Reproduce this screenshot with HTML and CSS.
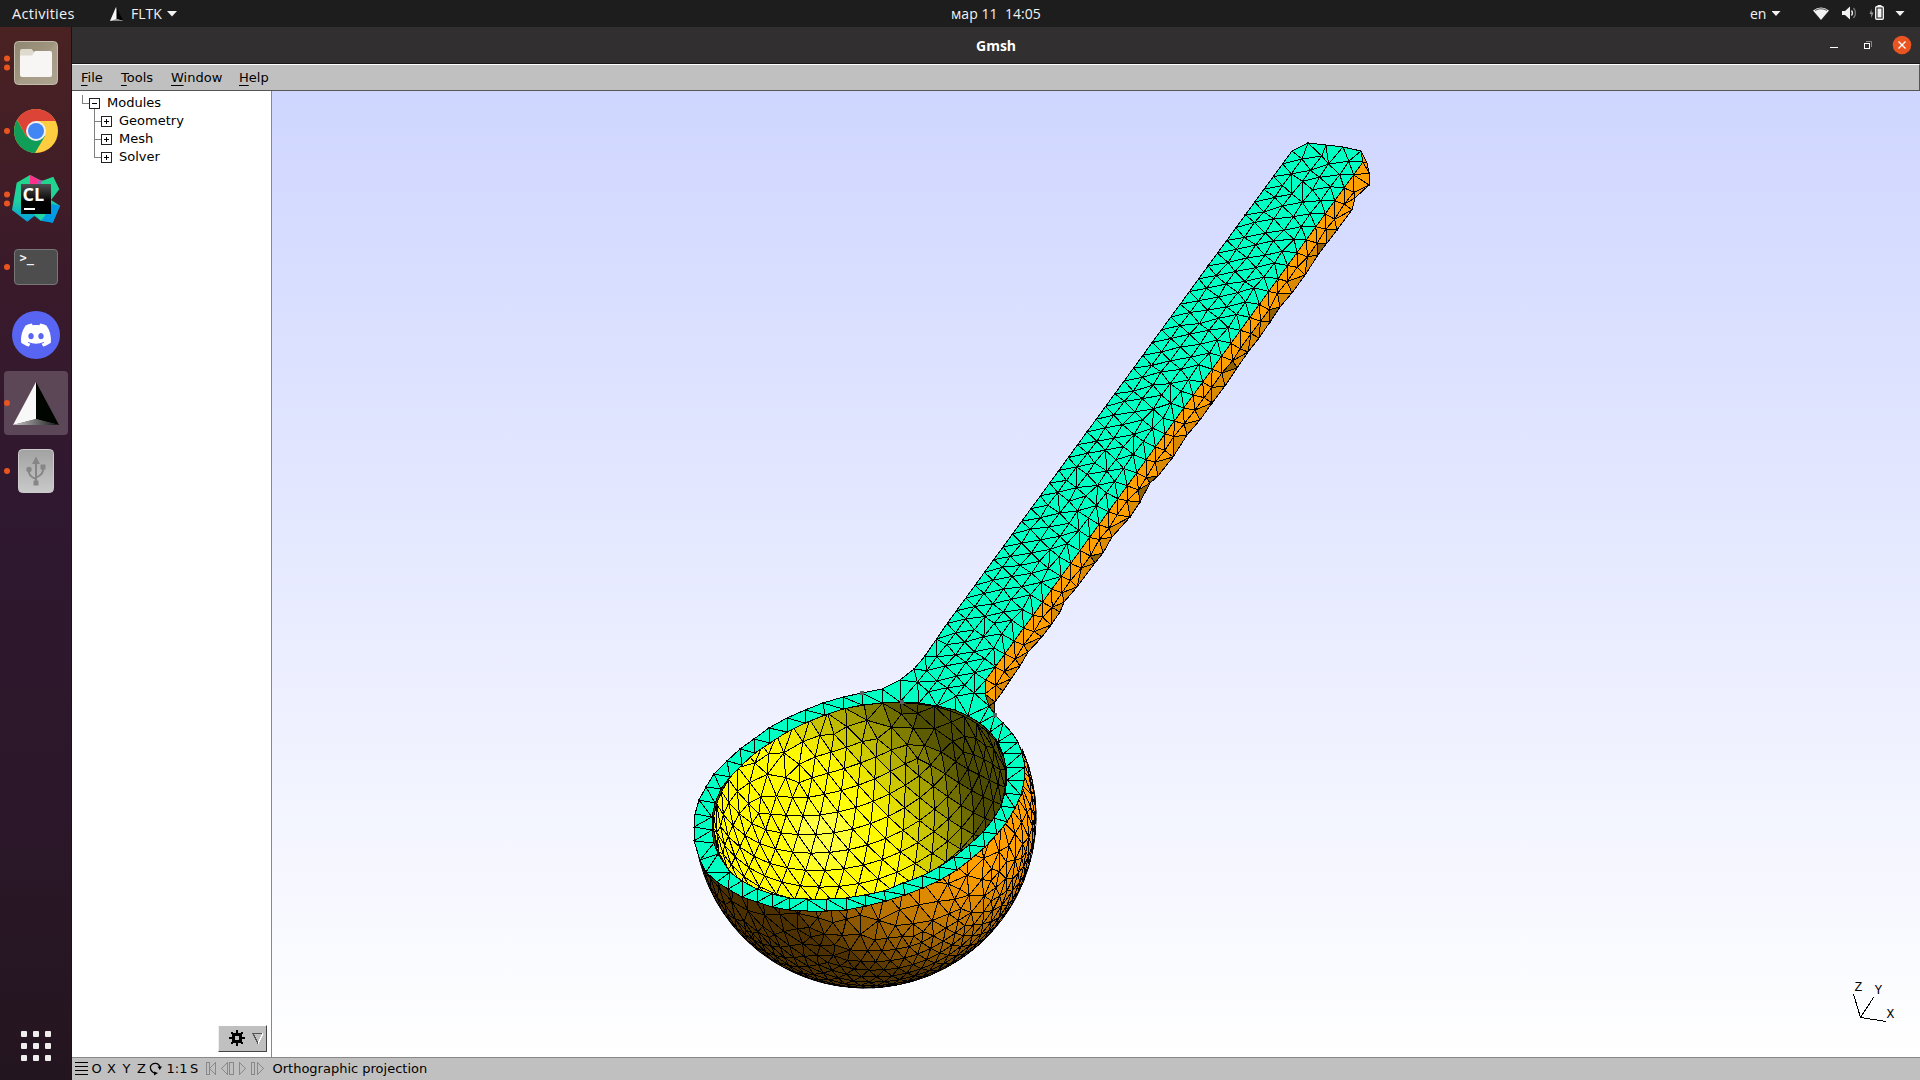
FILE: index.html
```html
<!DOCTYPE html>
<html lang="en">
<head>
<meta charset="utf-8">
<title>Gmsh</title>
<link rel="stylesheet" href="styles.css">
</head>
<body>
<div class="desktop">
  <header class="topbar">
    <span class="activities">Activities</span>
    <svg class="app-glyph" width="16" height="16" viewBox="0 0 16 16"><path d="M8 1 2 15h13z" fill="#f5f5f5"/><path d="M8.500 1v12l7 2z" fill="#000"/><path d="M2 15l6.500-2 7 2z" fill="#888"/></svg>
    <span class="app-name">FLTK</span>
    <svg class="caret" width="10" height="6" viewBox="0 0 10 6"><path d="M0 0h10L5 5.500z" fill="#f2f2f2"/></svg>
    <span class="clock">мар 11&nbsp; 14:05</span>
    <span class="lang">en</span>
    <svg class="tray" width="140" height="27" viewBox="1772 0 140 27">
      <path d="M1771.500 11h9l-4.500 5z" fill="#f2f2f2"/>
      <path d="M1813 10.500q8-6 16 0L1821 20z" fill="#f2f2f2"/><path d="M1815 10.500q6-3.500 12 0" fill="none" stroke="#555" stroke-width="1"/>
      <path d="M1842 11h3l5-4.500v13l-5-4.500h-3z" fill="#f2f2f2"/>
      <path d="M1851.500 10.500q2 2.500 0 5" fill="none" stroke="#f2f2f2" stroke-width="1.300"/>
      <path d="M1853.500 8q4 5 0 10" fill="none" stroke="#777" stroke-width="1.300"/>
      <path d="M1871.500 9l-2 5h1.700v4l2.300-5.500h-2z" fill="#999"/>
      <rect x="1875.700" y="6.700" width="7.600" height="12.600" rx="1" fill="none" stroke="#f2f2f2" stroke-width="1.400"/>
      <rect x="1877.500" y="8.500" width="4" height="9" fill="#f2f2f2"/><rect x="1877.500" y="5" width="4" height="2" fill="#f2f2f2"/>
      <path d="M1895.500 11h9l-4.500 5z" fill="#f2f2f2"/>
    </svg>
  </header>

  <div class="main">
    <nav class="dock">
      <svg class="slot" viewBox="0 0 64 64">
        <defs><linearGradient id="fl" x1="0" y1="0" x2="1" y2="1"><stop offset="0" stop-color="#8f8672"/><stop offset=".5" stop-color="#a0967f"/><stop offset=".5" stop-color="#a59b87"/><stop offset="1" stop-color="#aca390"/></linearGradient></defs>
        <circle cx="3" cy="27.500" r="3" fill="#e95420"/><circle cx="3" cy="36.500" r="3" fill="#e95420"/>
        <rect x="10.500" y="10.500" width="43" height="43" rx="4" fill="url(#fl)" stroke="#c3bcab"/>
        <path d="M16 20q0-2 2-2h9.500l3.500 4v6H16z" fill="#dedacd"/>
        <path d="M16 24.500h12l3-4.500h15q2 0 2 2v22q0 2-2 2H18q-2 0-2-2z" fill="#f7f6f5"/>
      </svg>
      <svg class="slot" viewBox="0 0 64 64">
        <circle cx="3" cy="32" r="3" fill="#e95420"/>
        <circle cx="32" cy="32" r="22" fill="#ffcd40"/>
        <path d="M32 32 22.500 37.500 13 21A22 22 0 0 0 31 54L41 37z" fill="#0f9d58"/>
        <path d="M32 22h19.600A22 22 0 0 0 13 20.700L22.500 37.500 32 32z" fill="#db4437"/>
        <circle cx="32" cy="32" r="10" fill="#f1f1f1"/><circle cx="32" cy="32" r="8" fill="#4285f4"/>
      </svg>
      <svg class="slot" viewBox="0 0 64 64">
        <defs><linearGradient id="c1" x1="0" y1="0" x2="0" y2="1"><stop offset="0" stop-color="#21d789"/><stop offset=".55" stop-color="#21d0a0"/><stop offset="1" stop-color="#009ae5"/></linearGradient>
        <linearGradient id="c2" x1="0" y1="0" x2="0" y2="1"><stop offset="0" stop-color="#505050"/><stop offset=".6" stop-color="#000"/></linearGradient></defs>
        <circle cx="3" cy="27.500" r="3" fill="#e95420"/><circle cx="3" cy="36.500" r="3" fill="#e95420"/>
        <path d="M12.700 15.700 26 8l11.700 6 11.600-4.300 6 12.600L47 33l9 5.700-7.300 17-12-2-6.400-4.700-7 5.700L8 43z" fill="url(#c1)"/>
        <path d="M26 8l11.700 6L36 18H26z" fill="#ff318c"/><path d="M34 14l5-1-3 5h-4z" fill="#a060b0"/>
        <path d="M47 37l9 1.700-7.300 17-9-3z" fill="#009ae5"/><path d="M30 47h12l-5 6.700z" fill="#21d79f"/>
        <rect x="17" y="17" width="30" height="30" fill="url(#c2)"/>
        <text x="18.500" y="33.500" class="clion">CL</text>
        <rect x="20" y="41" width="11" height="2" fill="#fff"/>
      </svg>
      <svg class="slot" viewBox="0 0 64 64">
        <circle cx="3" cy="32" r="3" fill="#e95420"/>
        <rect x="10.500" y="14.500" width="43" height="35" rx="3.500" fill="#4d4d4d" stroke="#777"/>
        <text x="15.500" y="27" class="prompt">&gt;_</text>
      </svg>
      <svg class="slot" viewBox="0 0 64 64">
        <circle cx="32" cy="32" r="24" fill="#5865f2"/>
        <path transform="translate(17 17) scale(1.250)" fill="#fff" d="M20.317 4.370a19.791 19.791 0 0 0-4.885-1.515.074.074 0 0 0-.079.037c-.211.375-.445.865-.608 1.250-1.845-.276-3.680-.276-5.487 0-.164-.393-.406-.874-.618-1.250a.077.077 0 0 0-.079-.037 19.736 19.736 0 0 0-4.885 1.515.070.070 0 0 0-.032.028C.533 9.046-.319 13.580.099 18.058a.082.082 0 0 0 .031.056c2.053 1.508 4.041 2.423 5.993 3.029a.078.078 0 0 0 .084-.028c.462-.630.873-1.295 1.226-1.994a.076.076 0 0 0-.042-.106c-.653-.248-1.274-.550-1.872-.892a.077.077 0 0 1-.008-.128c.126-.094.252-.192.372-.291a.074.074 0 0 1 .078-.011c3.928 1.793 8.180 1.793 12.061 0a.074.074 0 0 1 .079.010c.120.099.246.198.373.292a.077.077 0 0 1-.007.128 12.299 12.299 0 0 1-1.873.891.077.077 0 0 0-.041.107c.360.698.772 1.363 1.225 1.993a.076.076 0 0 0 .084.029c1.961-.607 3.950-1.522 6.002-3.029a.077.077 0 0 0 .031-.055c.500-5.177-.838-9.674-3.549-13.660a.061.061 0 0 0-.031-.029zM8.020 15.331c-1.183 0-2.157-1.086-2.157-2.419s.956-2.419 2.157-2.419c1.211 0 2.176 1.095 2.157 2.419 0 1.333-.956 2.419-2.157 2.419zm7.975 0c-1.183 0-2.157-1.086-2.157-2.419s.955-2.419 2.157-2.419c1.211 0 2.176 1.095 2.157 2.419 0 1.333-.946 2.419-2.157 2.419z"/>
      </svg>
      <svg class="slot slot-active" viewBox="0 0 64 64">
        <defs><linearGradient id="g1"><stop offset="0" stop-color="#ccc"/><stop offset="1" stop-color="#111"/></linearGradient></defs>
        <circle cx="3" cy="32" r="3" fill="#e95420"/>
        <path d="M32 11 9 54l23-6z" fill="#f8f8f8"/><path d="M32 11l23 43-23-6z" fill="#000500"/><path d="M9 54l23-6 23 6z" fill="url(#g1)"/>
      </svg>
      <svg class="slot" viewBox="0 0 64 64">
        <defs><linearGradient id="u1" x1="0" y1="0" x2="0" y2="1"><stop offset="0" stop-color="#a2a2a2"/><stop offset="1" stop-color="#c9c9c9"/></linearGradient></defs>
        <circle cx="3" cy="32" r="3" fill="#e95420"/>
        <rect x="14.500" y="10.500" width="35" height="43" rx="4" fill="url(#u1)" stroke="#ccc"/>
        <g fill="none" stroke="#868686" stroke-width="2"><path d="M32 22v24M25 31q-1 6 7 9M39 29.500q1 6-7 9"/></g>
        <path d="M32 17.500l4 7.500h-8zM29.500 41.500h5v5h-5zM36.500 25.500h5v5h-5z" fill="#868686"/><circle cx="25" cy="30.500" r="2.700" fill="#868686"/>
      </svg>
      <svg class="slot apps" viewBox="0 0 64 64" fill="#f0eeec">
        <rect x="17" y="17" width="6" height="6" rx="1"/><rect x="29" y="17" width="6" height="6" rx="1"/><rect x="41" y="17" width="6" height="6" rx="1"/>
        <rect x="17" y="29" width="6" height="6" rx="1"/><rect x="29" y="29" width="6" height="6" rx="1"/><rect x="41" y="29" width="6" height="6" rx="1"/>
        <rect x="17" y="41" width="6" height="6" rx="1"/><rect x="29" y="41" width="6" height="6" rx="1"/><rect x="41" y="41" width="6" height="6" rx="1"/>
      </svg>
    </nav>

    <section class="window">
      <div class="titlebar">
        <span class="title">Gmsh</span>
        <svg class="winbtns" width="100" height="36" viewBox="1820 27 100 36">
          <rect x="1830" y="47" width="8" height="1" fill="#fff"/>
          <path d="M1866 41.500h5.500v5.500" fill="none" stroke="#888"/>
          <rect x="1864.500" y="43.500" width="5" height="5" fill="none" stroke="#fff"/>
          <circle cx="1902" cy="45" r="9.300" fill="#e95420"/><path d="M1898.500 41.500l7 7m0-7l-7 7" stroke="#fff" stroke-width="1.400"/>
        </svg>
      </div>
      <div class="menubar">
        <span class="menu m-file"><u>F</u>ile</span><span class="menu m-tools"><u>T</u>ools</span><span class="menu m-window"><u>W</u>indow</span><span class="menu"><u>H</u>elp</span>
      </div>
      <div class="content">
        <aside class="tree">
          <svg class="tree-lines" width="40" height="74" viewBox="72 91 40 74" shape-rendering="crispEdges" fill="none">
            <path d="M82.500 95v8.500h7M94.500 108v49.500h7M94.500 121.500h7M94.500 139.500h7" stroke="#808080"/>
            <path d="M89.500 98.500h10v10h-10zM101.500 116.500h10v10h-10zM101.500 134.500h10v10h-10zM101.500 152.500h10v10h-10z" fill="#fff" stroke="#222"/>
            <path d="M92 103.500h5M104 121.500h5M106.500 119v5M104 139.500h5M106.500 137v5M104 157.500h5M106.500 155v5" stroke="#000"/>
          </svg>
          <div class="tree-rows">
            <span>Modules</span><span class="child">Geometry</span><span class="child">Mesh</span><span class="child">Solver</span>
          </div>
          <div class="gear">
            <svg width="47" height="25" viewBox="219 1026 47 25" shape-rendering="crispEdges">
              <path d="M232 1033h10v10h-10zM236 1030h2v16h-2zM229 1037h16v2h-16zM231 1032h2v2h-2zM241 1032h2v2h-2zM231 1042h2v2h-2zM241 1042h2v2h-2z" fill="#000"/><path d="M235 1036h4v4h-4z" fill="#c0c0c0"/>
              <path d="M263 1033.500h-10l5 10" fill="none" stroke="#555"/><path d="M263 1033.500l-5 10" stroke="#fff"/>
            </svg>
          </div>
        </aside>
        <svg class="scene" id="scene" width="1648" height="966" viewBox="272 91 1648 966" shape-rendering="crispEdges">
          <g id="model"></g>
          <path d="M1853.500 994l7 23.500 26 4M1860.500 1017.500l13-20" fill="none" stroke="#000"/>
          <g class="axis"><text x="1854.500" y="991">Z</text><text x="1874.500" y="994">Y</text><text x="1886.500" y="1018">X</text></g>
        </svg>
      </div>
      <footer class="status">
        <svg width="17" height="22" viewBox="72 1058 17 22" shape-rendering="crispEdges"><path d="M75 1062.500h13M75 1066.500h13M75 1070.500h13M75 1074.500h13" stroke="#000"/></svg>
        <span>O</span><span>X</span><span>Y</span><span>Z</span>
        <svg width="14" height="22" viewBox="149 1058 14 22"><path d="M150.500 1066.500a5 5 0 0 1 9.500.500M150.500 1065.500q-1 6 5 8" fill="none" stroke="#000" stroke-width="1.200"/><path d="M157.500 1066.500h4.500l-2.200 3.500zM154 1071.500l4 1.500-4 2.500z" fill="#000"/></svg>
        <span class="scale">1:1</span><span class="sel">S</span>
        <svg width="70" height="22" viewBox="199 1058 70 22" fill="none" stroke="#888" shape-rendering="crispEdges">
          <path d="M206.500 1062.500h3v12h-3zM215.500 1062.500v12l-6-6z"/><path d="M227.500 1062.500v12l-6-6zM229.500 1062.500h4v12h-4z"/><path d="M239.500 1062.500l6 6-6 6z"/><path d="M251.500 1062.500h3v12h-3zM257.500 1062.500l6 6-6 6z"/>
        </svg>
        <span class="msg">Orthographic projection</span>
      </footer>
    </section>
  </div>
</div>
<script src="mesh.js"></script>
</body>
</html>
```

FILE: styles.css
```css
* { box-sizing: border-box; }
body { margin: 0; overflow: hidden; background: #1d1d1d; }
svg { display: block; flex: none; }
.desktop { width: 1920px; height: 1080px; display: flex; flex-direction: column; }

.topbar {
  height: 27px; flex: none; display: grid;
  grid-template-columns: 108px 23px 36px 784px 799px 22px 140px 8px;
  align-items: center; background: #1d1d1d; color: #f2f2f2;
  font: 14px/27px "Open Sans", "Noto Sans", sans-serif;
}
.activities { padding-left: 12px; font-size: 14.5px; letter-spacing: 0.3px; }
.app-name { letter-spacing: 0; }
.clock { letter-spacing: 0.05px; white-space: nowrap; }

.main { flex: 1; display: flex; min-height: 0; }
.dock {
  width: 72px; flex: none; display: flex; flex-direction: column; gap: 4px;
  padding: 4px 4px 2px; border-right: 1px solid #1d0f1a;
  background: linear-gradient(#4a2222 0%, #3a1a2a 23%, #2f1830 45%, #2b1729 75%, #23151f 100%);
}
.slot { width: 64px; height: 64px; border-radius: 4px; }
.slot-active { background: rgba(255, 255, 255, 0.2); }
.apps { margin-top: auto; }
.clion { font: bold 18px "Open Sans", sans-serif; fill: #fff; }
.prompt { font: bold 12px "DejaVu Sans Mono", monospace; fill: #f2f2f2; }

.window { flex: 1; min-width: 0; display: flex; flex-direction: column; font: 13px "DejaVu Sans", sans-serif; color: #000; }
.titlebar {
  height: 37px; flex: none; display: flex; justify-content: flex-end; background: #322f30;
  border-bottom: 1px solid #181818; color: #fff;
}
.title { width: 844px; padding-top: 1px; font: bold 14px/36px "Open Sans", sans-serif; }
.menubar {
  height: 27px; flex: none; display: flex; background: #c0c0c0; padding-left: 9px; line-height: 25px;
  border-top: 1px solid #fff; border-bottom: 1px solid #555; border-right: 1px solid #555;
}
.menu u { text-underline-offset: 3px; text-decoration-thickness: 1px; }
.m-file { width: 39px; }
.m-tools { width: 51px; padding-left: 1px; }
.m-window { width: 68px; }

.content { flex: 1; min-height: 0; display: flex; }
.tree { width: 200px; flex: none; background: #fff; border-right: 1px solid #888; display: grid; grid-template-columns: 40px 1fr; grid-template-rows: 1fr auto; }
.tree-rows { display: flex; flex-direction: column; line-height: 18px; padding-top: 3px; }
.tree-rows span { margin-left: -5px; }
.tree-rows .child { margin-left: 7px; }
.gear {
  grid-column: 1 / 3; justify-self: end; margin: 0 4px 5px 0; width: 49px; height: 27px; background: #c0c0c0;
  border: 1px solid; border-color: #fff #444 #444 #eee;
}
.scene { background: linear-gradient(#cfd6ff, #fff); }
.axis { font: 13px "Liberation Mono", monospace; }

.status {
  height: 23px; flex: none; display: grid; background: #c0c0c0; border-top: 1px solid #888;
  grid-template-columns: 17px 15px 15px 15px 15px 14px 27px 8px 71px 1fr;
  line-height: 22px; text-align: center;
}
.status svg:last-of-type { justify-self: end; }
.status .scale { padding-left: 1px; }
.status .msg { text-align: left; padding-left: 3.5px; }
```

FILE: mesh.js
```js
// Builds the ladle surface mesh as SVG triangles.
const NS = "http://www.w3.org/2000/svg";
const model = document.getElementById("model");
let seed = 7;
const rnd = () => ((seed = (seed * 16807) % 2147483647) / 2147483647);
const jit = (s) => (rnd() - 0.5) * 2 * s;

function delaunay(pts) {
  const n = pts.length;
  const P = pts.concat([[-1e5, -1e5], [1e5, -1e5], [0, 1e5]]);
  const circ = (a, b, c) => {
    const [ax, ay] = P[a], bx = P[b][0] - ax, by = P[b][1] - ay, cx = P[c][0] - ax, cy = P[c][1] - ay;
    const d = 2 * (bx * cy - by * cx) || 1e-12;
    const ux = (cy * (bx * bx + by * by) - by * (cx * cx + cy * cy)) / d;
    const uy = (bx * (cx * cx + cy * cy) - cx * (bx * bx + by * by)) / d;
    return { t: [a, b, c], x: ax + ux, y: ay + uy, r: ux * ux + uy * uy };
  };
  let T = [circ(n, n + 1, n + 2)];
  for (let i = 0; i < n; i++) {
    const [x, y] = P[i], edges = new Map(), keep = [];
    for (const t of T) {
      if ((x - t.x) ** 2 + (y - t.y) ** 2 < t.r) {
        for (let k = 0; k < 3; k++) {
          const a = t.t[k], b = t.t[(k + 1) % 3], key = a < b ? a * 9999 + b : b * 9999 + a;
          if (edges.has(key)) edges.delete(key); else edges.set(key, [a, b]);
        }
      } else keep.push(t);
    }
    T = keep;
    for (const [a, b] of edges.values()) T.push(circ(a, b, i));
  }
  return T.map((t) => t.t).filter((t) => t.every((v) => v < n));
}

function inside(x, y, poly) {
  let r = false;
  for (let i = 0, j = poly.length - 1; i < poly.length; j = i++) {
    const [xi, yi] = poly[i], [xj, yj] = poly[j];
    if (yi > y !== yj > y && x < ((xj - xi) * (y - yi)) / (yj - yi) + xi) r = !r;
  }
  return r;
}
const d = (poly) => "M" + poly.map((p) => p[0].toFixed(1) + " " + p[1].toFixed(1)).join("L") + "Z";
function path(data, fill, stroke, parent) {
  const e = document.createElementNS(NS, "path");
  e.setAttribute("d", data);
  e.setAttribute("fill", fill);
  e.setAttribute("fill-rule", "evenodd");
  if (stroke) e.setAttribute("stroke", stroke);
  (parent || model).appendChild(e);
}
const rgb = (c, k) => "rgb(" + c.map((v) => Math.round(Math.min(255, v * k))).join(",") + ")";

// --- bowl: two concentric spheres cut near the rim plane ---
const C = [865, 817];
const N = [-0.203, -0.757, 0.62], U = [0.966, -0.259, 0];
const V = [N[1] * U[2] - N[2] * U[1], N[2] * U[0] - N[0] * U[2], N[0] * U[1] - N[1] * U[0]];
const L = [0.6, -0.4, 0.7];

function sphere(R, H, step) {
  const rim = [], free = [], A = Math.sqrt(R * R - H * H), m = Math.round((2 * Math.PI * A) / 19);
  for (let i = 0; i < m; i++) {
    const a = (i / m) * 2 * Math.PI;
    rim.push([A * Math.cos(a), A * Math.sin(a), H]);
  }
  // local frame (u, v, n); equal-area lattice around the lowest point
  const top = Math.sqrt(2 * R * (R + H));
  for (let r = -20; r <= 20; r++) for (let c = -20; c <= 20; c++) {
    const gx = (c + (r & 1) / 2) * step, gy = r * step * 0.866, ca = 0.966, sa = -0.05;
    const x = gx * ca - gy * sa, y = gx * sa + gy * ca, q = Math.hypot(x, y);
    if (q > top - 13) continue;
    const z = -R + (q * q) / (2 * R), f = Math.sqrt(1 - (q * q) / (4 * R * R));
    free.push([x * f + jit(2), y * f + jit(2), z]);
  }
  const all = rim.concat(free);
  let T;
  for (let it = 0; it < 7; it++) {
    const flat = all.map((p) => { const k = 200 / (1.0001 * R - p[2]); return [p[0] * k + jit(0.001), p[1] * k]; });
    T = delaunay(flat);
    if (it === 6) break;
    const acc = all.map(() => [0, 0, 0, 0]);
    for (const t of T) for (const a of t) for (const b of t) if (a !== b) {
      for (let k = 0; k < 3; k++) acc[a][k] += all[b][k];
      acc[a][3]++;
    }
    for (let i = rim.length; i < all.length; i++) {
      const s = acc[i], p = [0, 1, 2].map((k) => 0.4 * all[i][k] + 0.6 * (s[k] / s[3]));
      const l = R / Math.hypot(...p);
      all[i] = p.map((v) => v * l);
    }
  }
  return { pts: all.map((p) => [0, 1, 2].map((k) => p[0] * U[k] + p[1] * V[k] + p[2] * N[k])), T };
}
function drawSphere(R, H, step, sign, color, gain, parent) {
  const { pts, T } = sphere(R, H, step);
  for (const t of T) {
    const q = t.map((i) => pts[i]);
    const c = [0, 1, 2].map((k) => ((q[0][k] + q[1][k] + q[2][k]) / 3 / R) * sign);
    if (c[2] < 0) continue;
    const nl = c[0] * L[0] + c[1] * L[1] + c[2] * L[2];
    const k = Math.min(1, 0.3 + gain * Math.max(0, nl));
    let fill = rgb(color, k);
    if (sign < 0) {
      const x = c[0] * -R + C[0] - 822, y = c[1] * -R + C[1] - 837, s = Math.max(0, 1 - Math.hypot(x, y) / 45);
      if (s > 0) fill = rgb([255, 255, 65 * Math.min(1, s * 1.6)], 1);
    }
    path(d(q.map((p) => [p[0] + C[0], p[1] + C[1]])), fill, "#000", parent);
  }
}

const rimOut = [[862,693],[843,697],[823,703],[805,710],[787,718],[769,728],[754,739],[740,749],[727,761],[714,774],[706,787],[699,800],[695,814],[694,827],[694,841],[700,860],[706,872],[717,882],[728,889],[742,897],[757,902],[772,907],[789,910],[807,911],[826,911],[846,910],[866,906],[886,901],[905,895],[923,888],[940,880],[957,870],[971,859],[985,847],[997,834],[1007,822],[1015,808],[1021,795],[1024,781],[1025,767],[1022,753],[1018,742],[1012,733],[1003,723],[995,715]];
const rimIn = [[862,705],[843,709],[825,715],[805,723],[787,732],[770,743],[755,753],[742,765],[730,777],[721,789],[715,803],[712,817],[712,830],[714,843],[718,854],[730,872],[742,881],[757,889],[772,894],[789,898],[807,899],[827,899],[846,898],[865,895],[884,891],[903,883],[922,876],[939,867],[954,857],[969,845],[983,832],[994,818],[1001,806],[1005,793],[1007,780],[1006,767],[1003,754],[998,742],[990,732],[980,723],[968,716],[955,710],[937,706],[919,703],[900,702],[882,703]];

path("M699 855A171 171 0 0 0 865 988A171 171 0 0 0 1036 817A171 171 0 0 0 1029 771L1022 753L940 860L800 900Z", "#3a2400", "#000");
const shell = document.createElementNS(NS, "clipPath");
shell.id = "shell";
model.appendChild(shell);
path("M696 845A171.500 171.500 0 0 0 865 988.500A171.500 171.500 0 0 0 1036.500 817A171.500 171.500 0 0 0 1030 769L1024 748L940 800L800 850Z", "#000", null, shell);
const outer = document.createElementNS(NS, "g");
outer.setAttribute("clip-path", "url(#shell)");
model.appendChild(outer);
drawSphere(171.5, 34, 17.8, 1, [255, 159, 0], 0.95, outer);

const clip = document.createElementNS(NS, "clipPath");
clip.id = "hollow";
model.appendChild(clip);
path(d(rimIn), "#000", null, clip);
const hollow = document.createElementNS(NS, "g");
hollow.setAttribute("clip-path", "url(#hollow)");
model.appendChild(hollow);
path(d(rimIn), "#4d4a00", null, hollow);
drawSphere(152, 21.4, 21, -1, [255, 250, 0], 1.1, hollow);

// --- handle side wall ---
const edge = [];
for (let i = 0; i <= 40; i++) edge.push([1363 - 9.43 * i, 162 + 12.95 * i]);
const low = [[1367,163],[1369,173],[1369,185],[1355,198],[1352,210],[1337,230],[1327,243],[1318,255],[1305,275],[1292,293],[1280,307],[1270,322],[1259,338],[1248,352],[1237,368],[1225,386],[1212,403],[1200,420],[1187,435],[1173,457],[1158,476],[1150,483],[1140,502],[1130,517],[1112,537],[1103,553],[1095,563],[1077,587],[1064,602],[1060,612],[1051,625],[1042,637],[1028,652],[1020,666],[1011,679],[1003,691],[995,702],[994,713]];
const side = [[1361, 151], ...low, [989, 706], [985, 694], ...edge.slice().reverse()];
const sidePts = side.slice();
for (let i = 1; i < 40; i++) {
  const x = edge[i][0] + 0.5 + jit(1.2), y = edge[i][1] + 16.5 + jit(2);
  if (inside(x, y, side)) sidePts.push([x, y]);
}
path(d(side), "#ffa000", "#000");
for (const t of delaunay(sidePts)) {
  const q = t.map((i) => sidePts[i]), cx = (q[0][0] + q[1][0] + q[2][0]) / 3, cy = (q[0][1] + q[1][1] + q[2][1]) / 3;
  if (!inside(cx, cy, side)) continue;
  const off = (cx - 1363) * 0.81 + (cy - 162) * 0.588;
  path(d(q), off > 13 && cy > 230 ? (rnd() < 0.2 ? "#8f6000" : "#d98a00") : "#ffa000", "#000");
}

// --- rim and top face of the handle ---
const face = [[1308, 143], [1326, 145], [1343, 147], [1361, 151], ...edge, [985, 694], [989, 706]];
face.push(...rimOut.slice().reverse());
face.push([882, 689], [900, 680], [914, 669], [925, 656], [936.500, 639]);
for (let i = 37; i >= 0; i--) face.push([1292 - 9.32 * i, 151 + 12.77 * i]);
const facePts = face.concat(rimIn), fixed = facePts.length;
for (let i = -2; i < 50; i++) for (let k = 1; k < 9; k++) {
  const x = 1292 - 9.35 * i + 18.9 * k + jit(1.5), y = 151 + 12.77 * i - 3.8 * k + jit(1.5);
  if (!inside(x, y, face) || inside(x, y, rimIn)) continue;
  if (facePts.slice(0, fixed).some((p) => Math.hypot(p[0] - x, p[1] - y) < 9.3)) continue;
  facePts.push([x, y]);
}
path(d(face) + d(rimIn), "#00ffc3", "#000");
for (const t of delaunay(facePts)) {
  const q = t.map((i) => facePts[i]), cx = (q[0][0] + q[1][0] + q[2][0]) / 3, cy = (q[0][1] + q[1][1] + q[2][1]) / 3;
  if (inside(cx, cy, face) && !inside(cx, cy, rimIn)) path(d(q), "#00ffc3", "#000");
}
for (const [x, y] of [[862, 693], [902, 702], [995, 715]]) path(`M${x - 2} ${y - 2}h4v4h-4z`, "#606060");
```
